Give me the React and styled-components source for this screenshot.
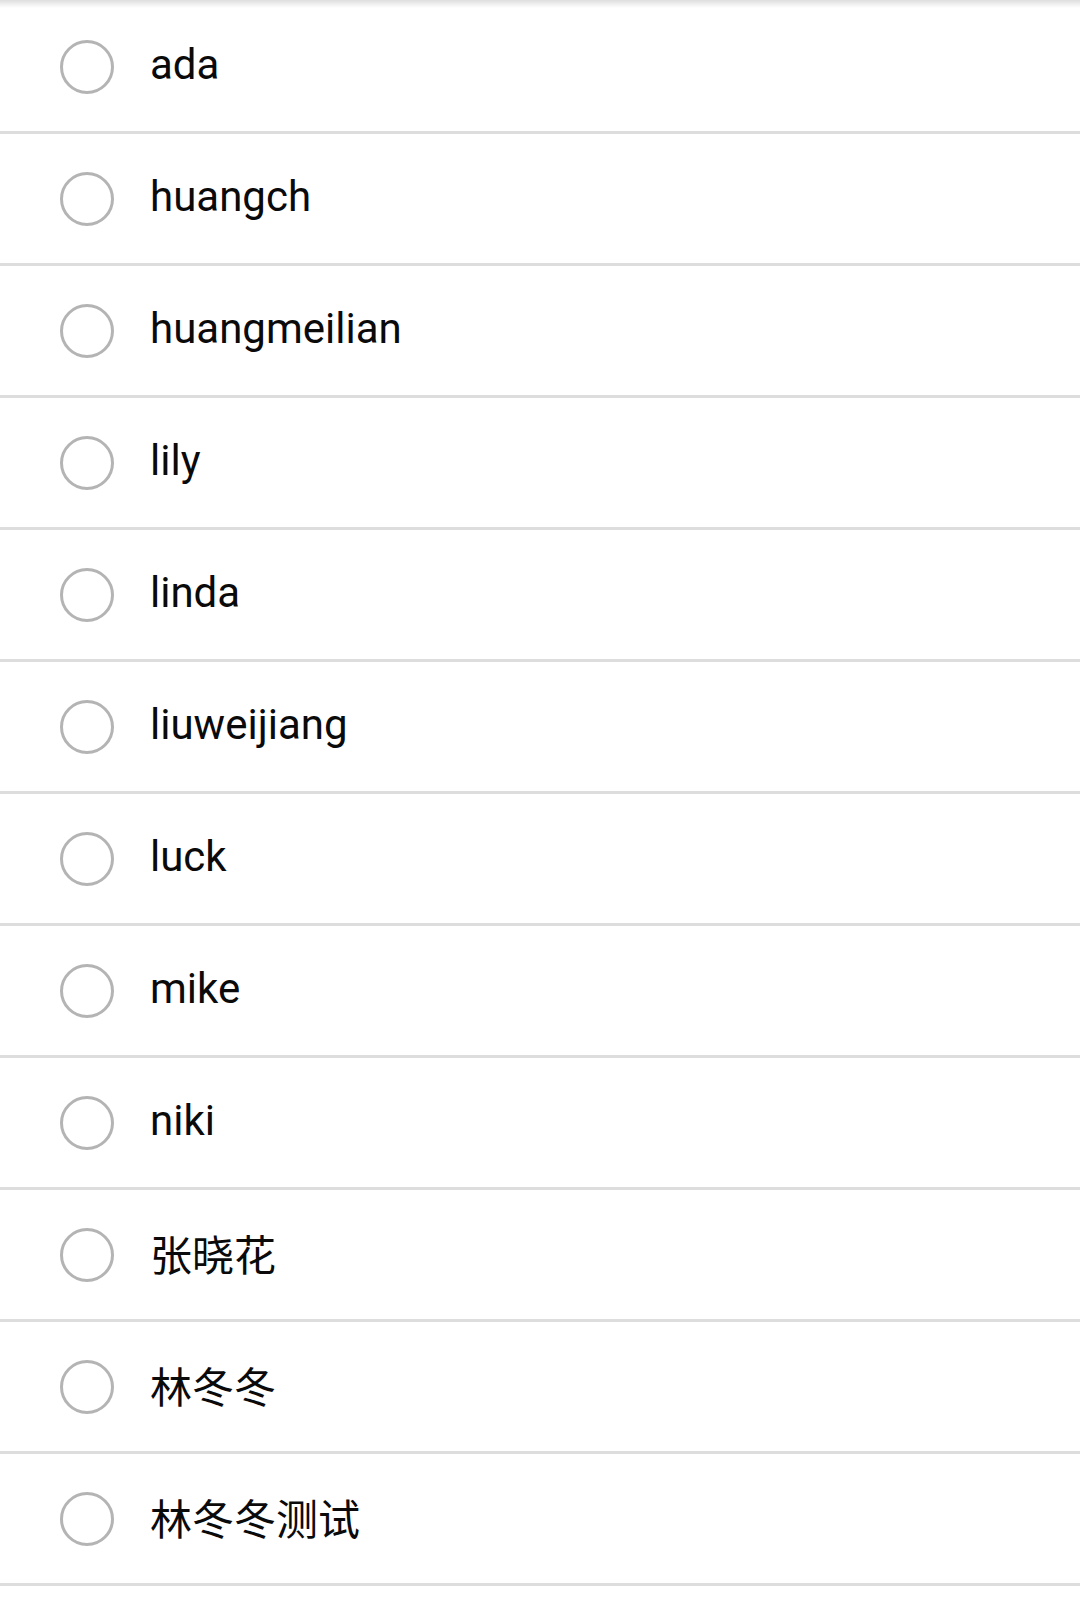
import styled, { createGlobalStyle } from "styled-components";

const names = [
  "ada",
  "huangch",
  "huangmeilian",
  "lily",
  "linda",
  "liuweijiang",
  "luck",
  "mike",
  "niki",
  "张晓花",
  "林冬冬",
  "林冬冬测试",
];

const Global = createGlobalStyle`
  body {
    margin: 0;
    background: #fff;
    font-family: Roboto, "Noto Sans CJK SC", sans-serif;
  }
`;

const List = styled.div`
  position: relative;
  padding-top: 2px;
  &::before {
    content: "";
    position: absolute;
    top: 0;
    left: 0;
    right: 0;
    height: 8px;
    background: linear-gradient(rgba(0, 0, 0, 0.13), rgba(0, 0, 0, 0));
  }
`;

const Row = styled.label`
  display: flex;
  align-items: center;
  height: 129px;
  padding-left: 60px;
  border-bottom: 3px solid #dddddd;
  cursor: pointer;
`;

const Radio = styled.span`
  width: 54px;
  height: 54px;
  box-sizing: border-box;
  border: 3px solid #b4b4b4;
  border-radius: 50%;
  flex-shrink: 0;
`;

const Name = styled.span`
  margin-left: 36px;
  margin-bottom: 4px;
  font-size: 42px;
  color: #0a0a0a;
`;

export default function App() {
  return (
    <>
      <Global />
      <List>
        {names.map((n) => (
          <Row key={n}>
            <Radio />
            <Name>{n}</Name>
          </Row>
        ))}
      </List>
    </>
  );
}
